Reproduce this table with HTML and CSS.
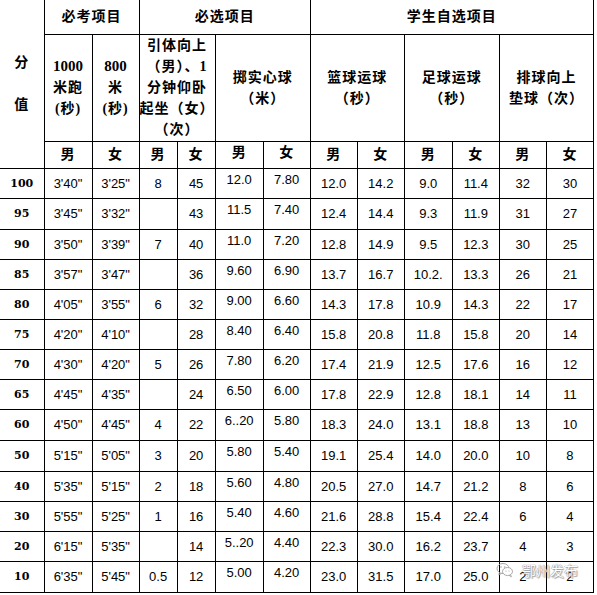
FILE: index.html
```html
<!DOCTYPE html>
<html lang="zh-CN">
<head>
<meta charset="utf-8">
<title>体育考试评分标准</title>
<link rel="stylesheet" href="styles.css">
</head>
<body>
<table class="score">
<colgroup>
<col class="c-fen"><col class="c48"><col class="c47"><col class="c38"><col class="c38"><col class="c48"><col class="c47"><col class="c47"><col class="c47"><col class="c48"><col class="c47"><col class="c47"><col class="c47">
</colgroup>
<tr class="h1">
<th rowspan="3" class="fen">分<br><br>值</th>
<th colspan="2">必考项目</th>
<th colspan="4">必选项目</th>
<th colspan="6">学生自选项目</th>
</tr>
<tr class="h2">
<th><span class="hnum">1000</span><br>米跑<br>(秒)</th>
<th><span class="hnum">800</span><br>米<br>(秒)</th>
<th colspan="2" class="pull">引体向上<br>（男）、1<br>分钟仰卧<br>起坐（女）<br>（次）</th>
<th colspan="2" class="shot">掷实心球<br>（米）</th>
<th colspan="2">篮球运球<br>（秒）</th>
<th colspan="2">足球运球<br>（秒）</th>
<th colspan="2">排球向上<br>垫球（次）</th>
</tr>
<tr class="h3">
<th>男</th><th>女</th><th>男</th><th>女</th><th class="up">男</th><th class="up">女</th><th>男</th><th>女</th><th>男</th><th>女</th><th>男</th><th>女</th>
</tr>
<tr class="r30"><td class="val">100</td><td>3'40"</td><td>3'25"</td><td>8</td><td>45</td><td class="top">12.0</td><td class="top">7.80</td><td>12.0</td><td>14.2</td><td>9.0</td><td>11.4</td><td>32</td><td>30</td></tr>
<tr class="r31"><td class="val">95</td><td>3'45"</td><td>3'32"</td><td></td><td>43</td><td class="top">11.5</td><td class="top">7.40</td><td>12.4</td><td>14.4</td><td>9.3</td><td>11.9</td><td>31</td><td>27</td></tr>
<tr class="r30"><td class="val">90</td><td>3'50"</td><td>3'39"</td><td>7</td><td>40</td><td class="top">11.0</td><td class="top">7.20</td><td>12.8</td><td>14.9</td><td>9.5</td><td>12.3</td><td>30</td><td>25</td></tr>
<tr class="r30"><td class="val">85</td><td>3'57"</td><td>3'47"</td><td></td><td>36</td><td class="top">9.60</td><td class="top">6.90</td><td>13.7</td><td>16.7</td><td>10.2.</td><td>13.3</td><td>26</td><td>21</td></tr>
<tr class="r30"><td class="val">80</td><td>4'05"</td><td>3'55"</td><td>6</td><td>32</td><td class="top">9.00</td><td class="top">6.60</td><td>14.3</td><td>17.8</td><td>10.9</td><td>14.3</td><td>22</td><td>17</td></tr>
<tr class="r30"><td class="val">75</td><td>4'20"</td><td>4'10"</td><td></td><td>28</td><td class="top">8.40</td><td class="top">6.40</td><td>15.8</td><td>20.8</td><td>11.8</td><td>15.8</td><td>20</td><td>14</td></tr>
<tr class="r30"><td class="val">70</td><td>4'30"</td><td>4'20"</td><td>5</td><td>26</td><td class="top">7.80</td><td class="top">6.20</td><td>17.4</td><td>21.9</td><td>12.5</td><td>17.6</td><td>16</td><td>12</td></tr>
<tr class="r30"><td class="val">65</td><td>4'45"</td><td>4'35"</td><td></td><td>24</td><td class="top">6.50</td><td class="top">6.00</td><td>17.8</td><td>22.9</td><td>12.8</td><td>18.1</td><td>14</td><td>11</td></tr>
<tr class="r31"><td class="val">60</td><td>4'50"</td><td>4'45"</td><td>4</td><td>22</td><td class="top">6..20</td><td class="top">5.80</td><td>18.3</td><td>24.0</td><td>13.1</td><td>18.8</td><td>13</td><td>10</td></tr>
<tr class="r31"><td class="val">50</td><td>5'15"</td><td>5'05"</td><td>3</td><td>20</td><td class="top">5.80</td><td class="top">5.40</td><td>19.1</td><td>25.4</td><td>14.0</td><td>20.0</td><td>10</td><td>8</td></tr>
<tr class="r30"><td class="val">40</td><td>5'35"</td><td>5'15"</td><td>2</td><td>18</td><td class="top">5.60</td><td class="top">4.80</td><td>20.5</td><td>27.0</td><td>14.7</td><td>21.2</td><td>8</td><td>6</td></tr>
<tr class="r30"><td class="val">30</td><td>5'55"</td><td>5'25"</td><td>1</td><td>16</td><td class="top">5.40</td><td class="top">4.60</td><td>21.6</td><td>28.8</td><td>15.4</td><td>22.4</td><td>6</td><td>4</td></tr>
<tr class="r30"><td class="val">20</td><td>6'15"</td><td>5'35"</td><td></td><td>14</td><td class="top">5..20</td><td class="top">4.40</td><td>22.3</td><td>30.0</td><td>16.2</td><td>23.7</td><td>4</td><td>3</td></tr>
<tr class="r31"><td class="val">10</td><td>6'35"</td><td>5'45"</td><td>0.5</td><td>12</td><td class="top">5.00</td><td class="top">4.20</td><td>23.0</td><td>31.5</td><td>17.0</td><td>25.0</td><td>2</td><td>2</td></tr>
</table>
<div class="mark">
<svg class="mark-icon" width="18" height="16" viewBox="0 0 18 16" aria-hidden="true">
<ellipse cx="7" cy="6.5" rx="6" ry="5" fill="none" stroke="#9a9a9a" stroke-width="1"/>
<path d="M3.5 10.5 L2.8 13 L5.6 11.4" fill="none" stroke="#9a9a9a" stroke-width="1"/>
<ellipse cx="11.5" cy="9.5" rx="5" ry="4" fill="#fff" stroke="#9a9a9a" stroke-width="1"/>
<path d="M14.5 12.6 L15.4 14.8 L13 13.3" fill="none" stroke="#9a9a9a" stroke-width="1"/>
<circle cx="5" cy="5" r="0.8" fill="#9a9a9a"/><circle cx="8.6" cy="5" r="0.8" fill="#9a9a9a"/>
<circle cx="10" cy="9" r="0.6" fill="#9a9a9a"/><circle cx="13" cy="9" r="0.6" fill="#9a9a9a"/>
</svg>
<span class="mark-text">鄂州发布</span>
</div>
</body>
</html>
```
FILE: styles.css
```css
html, body {
  margin: 0;
  padding: 0;
  background: #fff;
}
body {
  position: relative;
  width: 597px;
  height: 595px;
  overflow: hidden;
  font-family: "Liberation Sans", "Noto Sans CJK SC", sans-serif;
  color: #000;
}
.score {
  border-collapse: collapse;
  table-layout: fixed;
  width: 594px;
}
.c-fen { width: 44px; }
.c48 { width: 48px; }
.c47 { width: 47px; }
.c38 { width: 38px; }

.score th,
.score td {
  border: 1px solid #000;
  padding: 0;
  text-align: center;
  vertical-align: middle;
  white-space: nowrap;
}
.score .h1 > th { border-top: none; }
.score .fen,
.score .val { border-left: none; }

.score th {
  font-family: "Liberation Serif", "Noto Sans CJK SC", serif;
  font-weight: 700;
  font-size: 14px;
  letter-spacing: 1px;
  line-height: 21px;
}
.h1 { height: 34px; }
.h2 { height: 107px; }
.h3 { height: 27px; }
.fen { line-height: 22px; padding-bottom: 4px; }
.hnum { font-size: 15px; letter-spacing: 0; }
.pull { letter-spacing: 0.2px; }
.shot { padding-top: 24px; }
.h3 .up { padding-bottom: 4px; }

.r30 { height: 30px; }
.r31 { height: 31px; }
.score td {
  font-size: 13px;
  line-height: 15px;
}
.score td.val {
  font-family: "DejaVu Serif", serif;
  font-weight: 700;
  font-size: 11px;
}
.score td.top {
  vertical-align: top;
  padding-top: 3px;
}

.mark {
  position: absolute;
  left: 496px;
  top: 562px;
  display: flex;
  align-items: center;
  gap: 8px;
  opacity: 0.85;
}
.mark-icon { display: block; }
.mark-text {
  font-family: "Noto Sans CJK SC", sans-serif;
  font-size: 14px;
  line-height: 16px;
  color: #fff;
  text-shadow: 0 0 1px #777, 0 0 1px #777, 1px 1px 1px #999;
}
```
